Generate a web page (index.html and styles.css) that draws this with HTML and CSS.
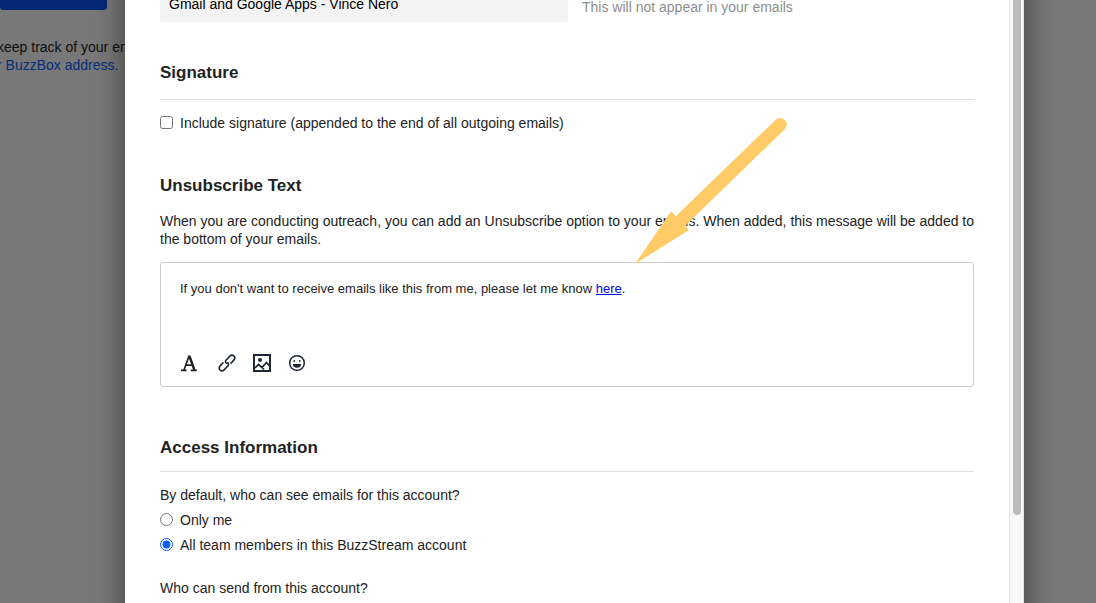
FILE: index.html
```html
<!DOCTYPE html>
<html lang="en">
<head>
<meta charset="utf-8">
<title>Email account settings</title>
<link rel="stylesheet" href="styles.css">
</head>
<body>
<main class="page">
  <button class="page-button" type="button" aria-label="Add account"></button>
  <p class="page-note">keep track of your emails<br><a href="#">r BuzzBox address.</a></p>
</main>
<div class="overlay">
  <div class="modal" role="dialog" aria-label="Account settings">
    <form class="modal-body">
      <div class="account-row">
        <input class="account-name" type="text" id="account" value="Gmail and Google Apps - Vince Nero" readonly>
        <label class="hint" for="account">This will not appear in your emails</label>
      </div>

      <section class="signature">
        <h2 class="title ruled">Signature</h2>
        <label class="choice"><input type="checkbox">Include signature (appended to the end of all outgoing emails)</label>
      </section>

      <section class="unsubscribe">
        <h2 class="title">Unsubscribe Text</h2>
        <p class="text">When you are conducting outreach, you can add an Unsubscribe option to your emails. When added, this message will be added to the bottom of your emails.</p>
        <div class="editor">
          <div class="editor-text">If you don't want to receive emails like this from me, please let me know <a href="#">here</a>.</div>
          <div class="toolbar">
            <button type="button" aria-label="Text format">
              <svg viewBox="0 0 18 18"><path d="M1 16.400h5.600M10.800 16.400h6M4 16L8.700 3M5 11.200h8" fill="none" stroke="#222" stroke-width="1.700"/><path d="M7.500 1.500h3l5.400 15h-2.600L8.600 3.500z" fill="#222"/></svg>
            </button>
            <button type="button" aria-label="Insert link">
              <svg viewBox="0 0 18 18"><g fill="none" stroke="#1d2733" stroke-width="1.600" stroke-linecap="round" stroke-linejoin="round"><path d="M8.200 9.300Q6.700 7.600 8.200 6l3.700-3.900q1.900-1.900 3.900-.200 1.900 2 .2 4l-3 3.300"/><path d="M9.800 8.700q1.500 1.700 0 3.300l-3.700 3.900q-1.900 1.900-3.900.200-1.900-2-.2-4l3-3.300"/></g></svg>
            </button>
            <button type="button" aria-label="Insert image">
              <svg viewBox="0 0 18 18"><rect x="1" y="1" width="16" height="16" fill="none" stroke="#1d2733" stroke-width="2"/><circle cx="7" cy="6" r="2" fill="#1d2733"/><path d="M2 14l3.500-3.500 3.500 3 4.500-5 3.500 4M9 13.500l2 2" fill="none" stroke="#1d2733" stroke-width="1.700"/></svg>
            </button>
            <button type="button" aria-label="Insert emoji">
              <svg viewBox="0 0 18 18"><circle cx="9" cy="9" r="7.300" fill="none" stroke="#1d2733" stroke-width="1.500"/><circle cx="6.200" cy="7" r=".9" fill="#1d2733"/><circle cx="11.800" cy="7" r=".9" fill="#1d2733"/><path d="M4.900 10h8.200a4.100 3.800 0 0 1-8.200 0z" fill="#1d2733"/></svg>
            </button>
          </div>
        </div>
      </section>

      <section class="access">
        <h2 class="title ruled">Access Information</h2>
        <fieldset class="group">
          <legend>By default, who can see emails for this account?</legend>
          <label class="choice"><input type="radio" name="see">Only me</label>
          <label class="choice"><input type="radio" name="see" checked>All team members in this BuzzStream account</label>
        </fieldset>
        <p class="text next-question">Who can send from this account?</p>
      </section>
    </form>
    <div class="scroll-track"><div class="scroll-thumb"></div></div>
    <svg class="arrow" viewBox="0 0 152 147" aria-hidden="true"><path d="M0 147L36 94.500l5 4.500L140.500 3a6.500 6.500 0 0 1 9.500 9L50 109l4 4z" fill="#ffcb66"/></svg>
  </div>
</div>
</body>
</html>
```
FILE: styles.css
```css
* {
  box-sizing: border-box;
}

body {
  margin: 0;
  height: 100vh;
  overflow: hidden;
  background: #fff;
  color: #222;
  font: 14px/18px "Liberation Sans", Arial, Helvetica, sans-serif;
}

.page-button {
  display: block;
  width: 107px;
  height: 10px;
  padding: 0;
  border: 0;
  border-radius: 0 0 3px 3px;
  background: #0758f8;
}

.page-note {
  margin: 28px 0 0 -3px;
  white-space: nowrap;
}

.page-note a {
  color: #0a63ff;
  text-decoration: none;
}

.overlay {
  position: fixed;
  inset: 0;
  display: flex;
  padding: 0 72px 0 125px;
  overflow: hidden;
  background: rgba(0, 0, 0, 0.53);
}

.modal {
  position: relative;
  flex: 1;
  display: flex;
  background: #fff;
}

/* Shadow runs past the window so that it stays even at top and bottom */
.modal::before {
  content: "";
  position: absolute;
  inset: -40px 0;
  z-index: -1;
  box-shadow: 0 0 30px rgba(0, 0, 0, 0.5);
}

.modal-body {
  flex: 1;
  min-width: 0;
  margin-top: -14px;
  padding: 0 35px;
}

.account-row {
  display: flex;
  align-items: center;
  gap: 14px;
}

.account-name {
  width: 408px;
  height: 36px;
  padding: 0 9px;
  border: 0;
  border-radius: 3px;
  background: #f3f3f3;
  color: #000;
  font: inherit;
}

.hint {
  padding-top: 6px;
  color: #8e8e8e;
}

.signature {
  margin-top: 41px;
}

.unsubscribe {
  margin-top: 44px;
}

.access {
  margin-top: 51px;
}

.title {
  margin: 0;
  font-size: 17px;
  line-height: 20px;
}

.ruled {
  margin-bottom: 14px;
  padding-bottom: 16px;
  border-bottom: 1px solid #e0e0e0;
}

.access .ruled {
  padding-bottom: 13px;
}

.text {
  margin: 16px -4px 0 0;
}

.choice {
  display: flex;
  align-items: center;
  gap: 7px;
}

.choice input {
  width: 13px;
  height: 13px;
  margin: 0 0 2px;
  accent-color: #0a60ff;
}

.editor {
  display: flex;
  flex-direction: column;
  justify-content: space-between;
  min-height: 125px;
  margin-top: 14px;
  padding: 17px 19px 14px;
  border: 1px solid #ccc;
  border-radius: 3px;
}

.editor-text {
  font-size: 13px;
}

.editor-text a {
  color: #00e;
}

.toolbar {
  display: flex;
  gap: 17px;
}

.toolbar button {
  width: 18px;
  height: 18px;
  padding: 0;
  border: 0;
  background: none;
}

.toolbar button:first-child {
  margin-right: 3px;
}

.toolbar svg {
  display: block;
}

.group {
  display: flex;
  flex-direction: column;
  gap: 7px;
  margin: 0;
  padding: 0;
  border: 0;
}

.group legend {
  margin-bottom: 7px;
  padding: 0;
}

.next-question {
  margin-top: 25px;
}

.scroll-track {
  width: 15px;
  padding: 0 2px 0 3px;
  border: solid #e3e3e3;
  border-width: 0 1px;
  background: #f8f8f8;
}

.scroll-thumb {
  width: 8px;
  height: 85.4%;
  border-radius: 0 0 4px 4px;
  background: #bbb;
}

.arrow {
  position: absolute;
  top: 117px;
  left: 510px;
  width: 152px;
  height: 147px;
}
```
